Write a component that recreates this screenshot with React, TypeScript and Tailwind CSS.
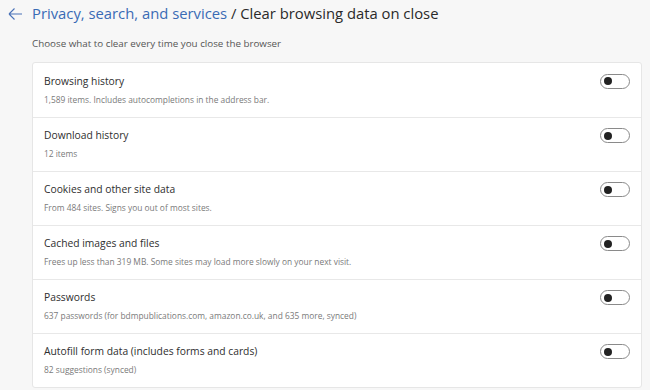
import React from "react";

const rows = [
  { title: "Browsing history", desc: "1,589 items. Includes autocompletions in the address bar." },
  { title: "Download history", desc: "12 items" },
  { title: "Cookies and other site data", desc: "From 484 sites. Signs you out of most sites." },
  { title: "Cached images and files", desc: "Frees up less than 319 MB. Some sites may load more slowly on your next visit." },
  { title: "Passwords", desc: "637 passwords (for bdmpublications.com, amazon.co.uk, and 635 more, synced)" },
  { title: "Autofill form data (includes forms and cards)", desc: "82 suggestions (synced)" },
];

function Toggle() {
  return (
    <div className="w-[30px] h-[15px] rounded-full border border-[#8a8a8a] bg-white flex items-center pl-[3px]">
      <div className="w-[8px] h-[8px] rounded-full bg-[#222]" />
    </div>
  );
}

export default function App() {
  return (
    <div className="w-[650px] h-[390px] overflow-hidden bg-[#f7f7f7] font-['Open_Sans',sans-serif]">
      <div className="flex items-center h-[26px] pt-[1px]">
        <svg width="32" height="20" viewBox="0 0 32 20" className="shrink-0">
          <path d="M9 10 H22 M9 10 L14.5 4.5 M9 10 L14.5 15.5" stroke="#4a72b8" strokeWidth="1.1" fill="none" />
        </svg>
        <h1 className="text-[14.8px] leading-none">
          <span className="text-[#3a6bb5]">Privacy, search, and services</span>
          <span className="text-[#2a2a2a]"> / Clear browsing data on close</span>
        </h1>
      </div>
      <p className="ml-[32px] mt-[11px] text-[9.8px] text-[#555]">Choose what to clear every time you close the browser</p>
      <div className="ml-[32px] mt-[10px] w-[610px] bg-white border border-[#e6e6e6] rounded-[3px]">
        {rows.map((r, i) => (
          <div
            key={r.title}
            className={`flex items-center justify-between h-[54px] pl-[11px] pr-[11px] ${i > 0 ? "border-t border-[#e8e8e8]" : ""}`}
          >
            <div className="flex flex-col">
              <span className="text-[10.3px] leading-[14px] text-[#2e2e2e]">{r.title}</span>
              <span className="text-[8.4px] leading-[12px] mt-[6px] text-[#7a7a7a]">{r.desc}</span>
            </div>
            <div className="mb-[17px]">
              <Toggle />
            </div>
          </div>
        ))}
      </div>
    </div>
  );
}
